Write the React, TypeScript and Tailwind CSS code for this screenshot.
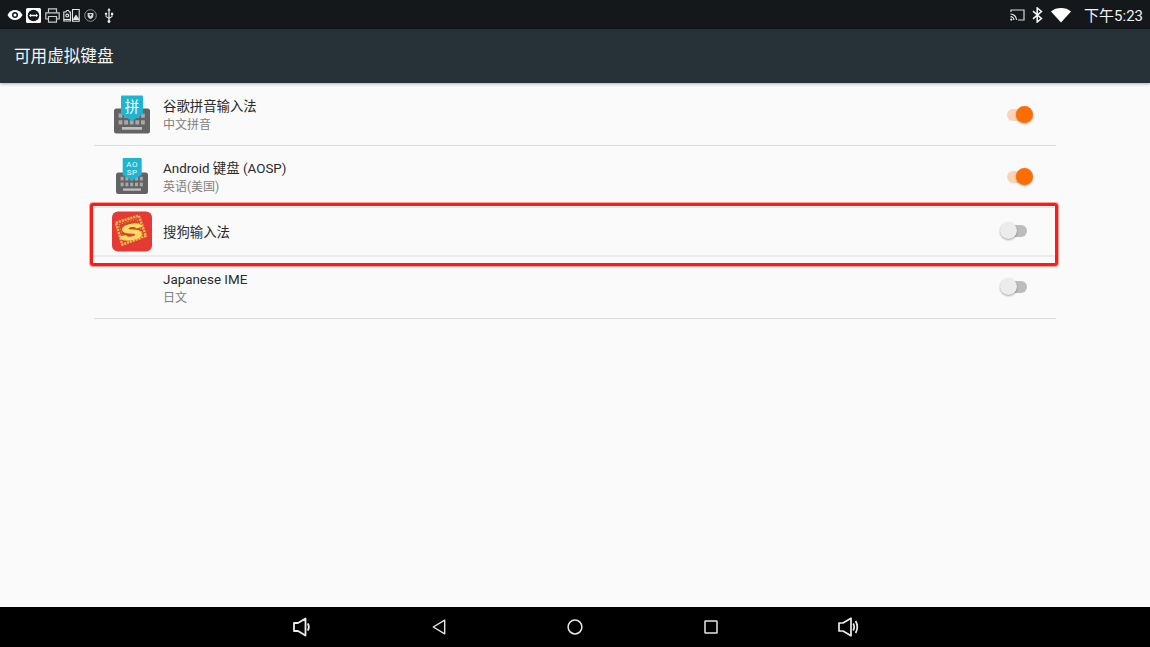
import React from "react";

const FONT = "font-['Roboto','Noto_Sans_CJK_SC','Noto_Sans',sans-serif]";

function Eye() {
  return (
    <svg width="16" height="12" viewBox="0 0 16 12">
      <path d="M0.5 6C2.2 2.8 4.900 1 8 1s5.800 1.800 7.500 5c-1.700 3.200-4.400 5-7.500 5S2.200 9.200.5 6z" fill="#fff" />
      <circle cx="8" cy="6" r="3" fill="#14181b" />
      <circle cx="8" cy="6" r="1.500" fill="#fff" />
    </svg>
  );
}
function TeamViewer() {
  return (
    <svg width="15" height="15" viewBox="0 0 15 15">
      <rect width="15" height="15" rx="1.500" fill="#fff" />
      <circle cx="7.500" cy="7.500" r="5.800" fill="#14181b" />
      <path d="M3 7.500l2-1.700v1h5v-1l2 1.700-2 1.700v-1H5v1z" fill="#fff" />
    </svg>
  );
}
function Printer() {
  return (
    <svg width="15" height="15" viewBox="0 0 15 15" fill="none" stroke="#c9cbcc" strokeWidth="1.200">
      <path d="M3.500 4.500V.8h8v3.700" />
      <path d="M3.500 11H.8V4.800h13.400V11h-2.700" />
      <path d="M3.500 8.500h8v5.700h-8z" />
    </svg>
  );
}
function Photos() {
  return (
    <svg width="17" height="14" viewBox="0 0 17 14" fill="none" stroke="#e4e5e5" strokeWidth="1.100">
      <path d="M.8 4h2l1-1.500h1.600l1 1.500h1v9H.8z" />
      <circle cx="4.200" cy="7.500" r="1.400" />
      <path d="M9.500 1.500h6.700v11.700H9.500z" />
      <path d="M10 12l3-4.500 3 4.500" fill="#e4e5e5" />
      <path d="M1 11.500h6" />
    </svg>
  );
}
function Shield() {
  return (
    <svg width="13" height="13" viewBox="0 0 13 13">
      <circle cx="6.500" cy="6.500" r="5.800" fill="none" stroke="#8b8e90" strokeWidth="1" />
      <path d="M3.600 3.900h5.800v2.600c0 1.700-1.300 2.900-2.900 3.500-1.600-.6-2.900-1.800-2.900-3.500z" fill="#d4d5d6" />
      <path d="M5 5.200l1.500 2.400L8 5.200z" fill="#14181b" />
    </svg>
  );
}
function Usb() {
  return (
    <svg width="10" height="15" viewBox="0 0 10 15" fill="#f2f2f2">
      <path d="M5 0l1.700 2.500H5.600v7.100l2-1.300V7H7V4.800h2.200V7h-.7v1.800L5.600 10.700v1.500a1.400 1.400 0 1 1-1.200 0v-1.700L1.600 8.700V6.800a1.100 1.100 0 1 1 .9 0v1.400l1.900 1.200V2.500H3.300z" />
    </svg>
  );
}
function Cast() {
  return (
    <svg width="15" height="12" viewBox="0 0 15 12" fill="none">
      <path d="M1 3V1h13v10H8" stroke="#d8d9d9" strokeWidth="1.200" />
      <path d="M.5 5a6 6 0 0 1 6 6M.5 7.600A3.400 3.400 0 0 1 3.900 11" stroke="#eee" strokeWidth="1.100" />
      <circle cx="1.300" cy="10.600" r="1.100" fill="#eee" />
    </svg>
  );
}
function Bluetooth() {
  return (
    <svg width="11" height="16" viewBox="0 0 11 16" fill="none" stroke="#f4f4f4" strokeWidth="1.600">
      <path d="M1 4.200l8.400 7.300-4.200 3.500V1l4.200 3.500L1 11.800" />
    </svg>
  );
}
function Wifi() {
  return (
    <svg width="20" height="15" viewBox="0 0 20 15">
      <path d="M10 14.600L0 3.400C2.600 1.200 6.100 0 10 0s7.400 1.200 10 3.400z" fill="#fff" />
    </svg>
  );
}

function VolumeDown() {
  return (
    <svg width="18" height="20" viewBox="0 0 18 20" fill="none" stroke="#ececec" strokeWidth="1.800">
      <path d="M1 6h4L12.500 1.500v17L5 14H1z" strokeLinejoin="round" />
      <path d="M14.800 6.400c1.300 2.200 1.300 5 0 7.200" />
    </svg>
  );
}
function VolumeUp() {
  return (
    <svg width="21" height="20" viewBox="0 0 21 20" fill="none" stroke="#ececec" strokeWidth="1.700">
      <path d="M1 6h4L13 1.200v17.600L5 14H1z" strokeLinejoin="round" />
      <path d="M15.200 6.500c1.200 2.200 1.200 4.800 0 7M17.600 4c2.100 3.700 2.100 8.300 0 12" />
    </svg>
  );
}
function Back() {
  return (
    <svg width="14" height="16" viewBox="0 0 14 16" fill="none" stroke="#e6e6e6" strokeWidth="1.400">
      <path d="M12.700 1.200v13.600L1.300 8z" strokeLinejoin="round" />
    </svg>
  );
}
function Home() {
  return (
    <svg width="16" height="16" viewBox="0 0 16 16" fill="none" stroke="#e6e6e6" strokeWidth="1.500">
      <circle cx="8" cy="8" r="6.900" />
    </svg>
  );
}
function Recent() {
  return (
    <svg width="14" height="14" viewBox="0 0 14 14" fill="none" stroke="#e6e6e6" strokeWidth="1.500">
      <rect x="1" y="1" width="12" height="12" rx="0.500" />
    </svg>
  );
}

function Keys({ x, y, w, h }: { x: number; y: number; w: number; h: number }) {
  const cols = [0, 1, 2, 3, 4];
  const pitch = (w - 8) / 5;
  return (
    <g>
      <rect x={x} y={y} width={w} height={h} rx="2.500" fill="#636363" />
      {[0, 1].map((r) =>
        cols.map((c) => (
          <rect
            key={`${r}-${c}`}
            x={x + 4 + c * pitch + 0.6}
            y={y + h * 0.2 + r * (h * 0.27)}
            width={pitch - 1.800}
            height={h * 0.17}
            fill="#a8a8a8"
          />
        ))
      )}
      <rect x={x + w * 0.22} y={y + h * 0.74} width={w * 0.56} height={h * 0.11} fill="#bdbdbd" />
    </g>
  );
}

function PinyinIcon() {
  return (
    <svg width="40" height="40" viewBox="0 0 40 40">
      <Keys x={2} y={13.5} w={36} h={25} />
      <path d="M10 .5h20a1 1 0 0 1 1 1V19L20 26 9 19V1.500a1 1 0 0 1 1-1z" fill="#1fb5d0" />
      <text x="20" y="16.500" textAnchor="middle" fontSize="14.500" fill="#fff" fontFamily="'Noto Sans CJK SC', sans-serif">拼</text>
    </svg>
  );
}
function AospIcon() {
  return (
    <svg width="40" height="40" viewBox="0 0 40 40">
      <Keys x={4} y={15.500} w={32} h={21.500} />
      <path d="M11.500 1h17.400a.8.800 0 0 1 .8.800V18L20 23.500 10.700 18V1.800a.8.800 0 0 1 .8-.8z" fill="#1fb5d0" />
      <text x="20.200" y="10" textAnchor="middle" fontSize="8" letterSpacing="0.6" fill="#e8f8fb" fontFamily="Roboto, sans-serif">AO</text>
      <text x="20.200" y="18" textAnchor="middle" fontSize="8" letterSpacing="0.6" fill="#e8f8fb" fontFamily="Roboto, sans-serif">SP</text>
    </svg>
  );
}
function SogouIcon() {
  return (
    <svg width="41" height="41" viewBox="0 0 41 41">
      <rect width="41" height="41" rx="6" fill="#e53935" />
      <path d="M4 11.500L27.500 4.300 34.800 25 10.500 34z" fill="#d8402f" />
      <path d="M4 11.500L27.500 4.300 34.800 25 10.500 34z" fill="none" stroke="#f3b94a" strokeWidth="2.600" strokeDasharray="2.200 0.900" strokeLinejoin="round" />
      <path d="M7 13.500L25.500 7.500 31.500 23.500 12.500 30.500z" fill="none" stroke="#eea13c" strokeWidth="1" strokeDasharray="1.500 1.500" />
      <text textAnchor="middle" fontSize="23" fontWeight="700" fontStyle="italic" fill="#fbdc62" stroke="#fbdc62" strokeWidth="1.300" fontFamily="'Liberation Sans', sans-serif" transform="translate(20.500 28.500) rotate(-8) scale(1.500 0.950)">S</text>
    </svg>
  );
}

function Toggle({ on, className = "" }: { on: boolean; className?: string }) {
  return on ? (
    <div className={`relative h-[17px] w-[33px] flex-none ${className}`}>
      <div className="absolute left-[7px] top-[3px] h-[12px] w-[24px] rounded-full bg-[#fdd3b7]" />
      <div className="absolute right-0 top-0 h-[17px] w-[17px] rounded-full bg-[#ff6d00] shadow-[0_1px_2px_rgba(0,0,0,0.35)]" />
    </div>
  ) : (
    <div className={`relative h-[17px] w-[33px] flex-none ${className}`}>
      <div className="absolute left-[2px] top-[3px] h-[12px] w-[25px] rounded-full bg-[#bcbcbc]" />
      <div className="absolute left-0 top-0 h-[17px] w-[17px] rounded-full bg-[#ececec] shadow-[0_1px_2px_rgba(0,0,0,0.35)]" />
    </div>
  );
}

function Row({
  icon,
  title,
  sub,
  on,
  rowClass,
  toggleClass,
  textClass = "pt-[3px]",
}: {
  icon?: React.ReactNode;
  title: string;
  sub?: string;
  on: boolean;
  rowClass: string;
  toggleClass?: string;
  textClass?: string;
}) {
  return (
    <div className={`flex items-center pl-[18px] pr-[23px] ${rowClass}`}>
      <div className="flex h-10 w-10 flex-none items-center justify-center">{icon}</div>
      <div className={`ml-[11px] flex-1 ${textClass}`}>
        <div className="text-[13.4px] leading-[18px] text-[#2a2a2a]">{title}</div>
        {sub && <div className="text-[12px] leading-[18px] text-[#808080]">{sub}</div>}
      </div>
      <Toggle on={on} className={toggleClass} />
    </div>
  );
}

export default function App() {
  return (
    <div className={`relative flex h-[647px] w-[1150px] flex-col overflow-hidden bg-[#fafafa] ${FONT}`}>
      <div className="flex h-[29px] flex-none items-center justify-between bg-[#14181b] pl-[7px] pr-[7px] pt-[1px]">
        <div className="flex items-center">
          <Eye />
          <div className="ml-[3px]"><TeamViewer /></div>
          <div className="ml-[4px]"><Printer /></div>
          <div className="ml-[3px]"><Photos /></div>
          <div className="ml-[4px]"><Shield /></div>
          <div className="ml-[7px]"><Usb /></div>
        </div>
        <div className="flex items-center">
          <Cast />
          <div className="ml-[7px]"><Bluetooth /></div>
          <div className="ml-[8px]"><Wifi /></div>
          <div className="ml-[13px] mt-[2px] text-[15px] leading-none text-[#f2f2f2]">下午5:23</div>
        </div>
      </div>
      <div className="z-10 flex h-[54px] flex-none items-center bg-[#263238] pl-[14px] pt-[3px] text-[16.6px] text-[#f5f6f6] shadow-[0_1px_3px_rgba(0,0,0,0.3)]">
        可用虚拟键盘
      </div>
      <div className="flex-1 px-[94px] pt-[1px]">
        <Row rowClass="h-[62px] border-b border-[#dcdcdc]" icon={<PinyinIcon />} title="谷歌拼音输入法" sub="中文拼音" on />
        <Row rowClass="h-[62px] border-b border-[#e6e6e6]" icon={<AospIcon />} title="Android 键盘 (AOSP)" sub="英语(美国)" on />
        <Row rowClass="h-[49px] border-b-2 border-[#ebebeb]" textClass="pt-[3px]" toggleClass="mb-[3px]" icon={<SogouIcon />} title="搜狗输入法" on={false} />
        <Row rowClass="h-[62px] border-b border-[#dcdcdc]" toggleClass="mb-[2px]" title="Japanese IME" sub="日文" on={false} />
      </div>
      <div className="flex h-[40px] flex-none items-center bg-black pl-[293px]">
        <div className="flex w-[18px] justify-center"><VolumeDown /></div>
        <div className="ml-[121px] flex w-[14px] justify-center"><Back /></div>
        <div className="ml-[121px] flex w-[16px] justify-center"><Home /></div>
        <div className="ml-[121px] flex w-[14px] justify-center"><Recent /></div>
        <div className="ml-[120px] flex w-[21px] justify-center"><VolumeUp /></div>
      </div>
      <div className="absolute left-[90px] top-[203px] h-[63px] w-[968px] rounded-[3px] border-[3px] border-[#fb1c13] shadow-[0_0_0_1px_rgba(251,28,19,0.4)]" />
    </div>
  );
}
